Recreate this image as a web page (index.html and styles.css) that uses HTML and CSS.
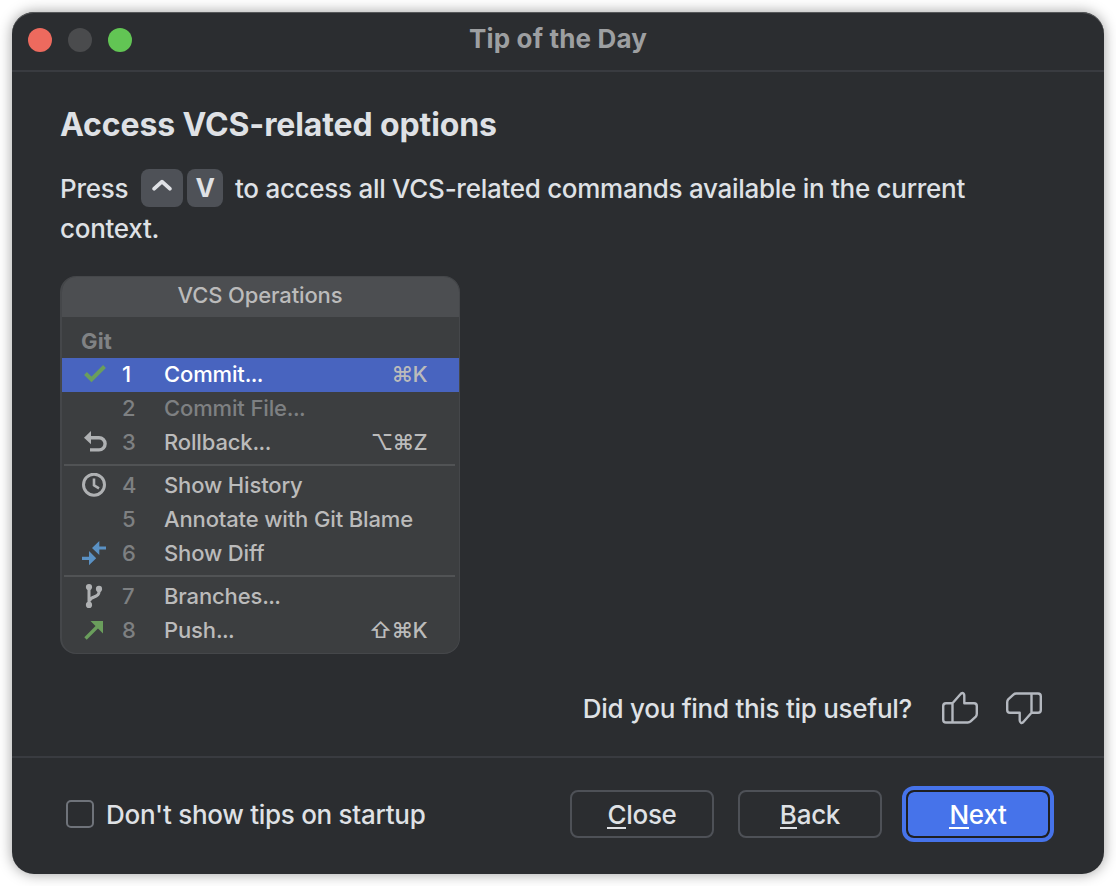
FILE: index.html
```html
<!DOCTYPE html>
<html lang="en">
<head>
<meta charset="utf-8">
<title>Tip of the Day</title>
<link rel="stylesheet" href="styles.css">
</head>
<body>
<main class="window">
  <header class="titlebar">
    <div class="lights"><span class="light red"></span><span class="light gray"></span><span class="light green"></span></div>
    <div class="window-title"><span class="t-title">Tip of the Day</span></div>
  </header>
  <section class="content">
    <h1 class="heading"><span>Access VCS-related options</span></h1>
    <div class="tip">
      <div class="tip-line">
        <span class="press">Press</span>
        <kbd class="key key-ctrl"><svg width="20" height="12" viewBox="0 0 20 12"><path d="M2.2 9.7 10 2.7 17.8 9.7" fill="none" stroke="#dfe1e5" stroke-width="3.8" stroke-linecap="round" stroke-linejoin="round"/></svg></kbd>
        <kbd class="key key-v">V</kbd>
        <span class="rest">to access all VCS-related commands available in the current</span>
      </div>
      <div class="tip-line second">context.</div>
    </div>
    <div class="menu">
      <div class="menu-title"><span>VCS Operations</span></div>
      <div class="group">Git</div>
      <div class="row selected"><span class="icon"><svg width="26" height="24" viewBox="0 0 26 24"><path d="M3.5 11.5 9.5 17.5 22.5 4.5" fill="none" stroke="#6a9e5c" stroke-width="4"/></svg></span><span class="num">1</span><span class="label">Commit<span class="dots">...</span></span><span class="shortcut">⌘K</span></div>
      <div class="row disabled"><span class="icon"></span><span class="num">2</span><span class="label">Commit File<span class="dots">...</span></span></div>
      <div class="row"><span class="icon"><svg width="26" height="24" viewBox="0 0 26 24"><path d="M8 7.7H17A6.1 6.1 0 0 1 17 19.9H8" fill="none" stroke="#afb1b3" stroke-width="3.4"/><path d="M2 7.7 9 1.1V14.3Z" fill="#afb1b3"/></svg></span><span class="num">3</span><span class="label">Rollback<span class="dots">...</span></span><span class="shortcut">⌥⌘Z</span></div>
      <div class="separator"></div>
      <div class="row"><span class="icon"><svg width="26" height="24" viewBox="0 0 26 24"><circle cx="12" cy="11.7" r="10.5" fill="none" stroke="#afb1b3" stroke-width="3"/><path d="M12 5.5V12.3L17 15.3" fill="none" stroke="#afb1b3" stroke-width="2.6"/></svg></span><span class="num">4</span><span class="label">Show History</span></div>
      <div class="row"><span class="icon"></span><span class="num">5</span><span class="label">Annotate with Git Blame</span></div>
      <div class="row"><span class="icon"><svg width="26" height="24" viewBox="0 0 26 24"><path d="M10 7 17.3 0V5.4H24V8.6H17.3V14Z M14.2 17.3 7 10V15.7H0V18.9H7V24.2Z" fill="#5a91c4"/></svg></span><span class="num">6</span><span class="label">Show Diff</span></div>
      <div class="separator"></div>
      <div class="row"><span class="icon"><svg width="26" height="24" viewBox="0 0 26 24"><path d="M7 3V21M17 5V8C17 14 8 12 7.5 17" fill="none" stroke="#afb1b3" stroke-width="3"/><circle cx="7" cy="3.1" r="3.1" fill="#afb1b3"/><circle cx="17" cy="4.9" r="3.1" fill="#afb1b3"/><circle cx="7" cy="20.9" r="3.1" fill="#afb1b3"/></svg></span><span class="num">7</span><span class="label">Branches<span class="dots">...</span></span></div>
      <div class="row"><span class="icon"><svg width="26" height="24" viewBox="0 0 26 24"><path d="M3.5 20.5 16 8" stroke="#6a9e5c" stroke-width="3.4"/><path d="M8.5 3H21V15.5Z" fill="#6a9e5c"/></svg></span><span class="num">8</span><span class="label">Push<span class="dots">...</span></span><span class="shortcut">⇧⌘K</span></div>
    </div>
    <div class="feedback">
      <span class="question">Did you find this tip useful?</span>
      <svg class="thumb" width="40" height="36" viewBox="0 0 40 36"><g fill="none" stroke="#b4b8bf" stroke-width="2.4" stroke-linejoin="round"><path d="M12.5 13.2 20.2 4.5Q21.6 2.6 23 3.1Q24.5 3.8 24.3 6.5V13.2H34Q36.8 13.2 36.8 16V23.8Q36.8 25.5 35.8 26.6L30.6 31.4Q29.4 32.5 27.8 32.5H6Q3.2 32.5 3.2 29.7V16Q3.2 13.2 6 13.2H12.5V32.5"/></g></svg>
      <svg class="thumb" width="40" height="36" viewBox="0 0 40 36"><g fill="none" stroke="#b4b8bf" stroke-width="2.4" stroke-linejoin="round" transform="rotate(180 20 18)"><path d="M12.5 13.2 20.2 4.5Q21.6 2.6 23 3.1Q24.5 3.8 24.3 6.5V13.2H34Q36.8 13.2 36.8 16V23.8Q36.8 25.5 35.8 26.6L30.6 31.4Q29.4 32.5 27.8 32.5H6Q3.2 32.5 3.2 29.7V16Q3.2 13.2 6 13.2H12.5V32.5"/></g></svg>
    </div>
  </section>
  <footer class="footer">
    <label class="option"><span class="checkbox"></span><span class="option-text">Don't show tips on startup</span></label>
    <div class="buttons">
      <button class="button"><span class="mn">C</span>lose</button>
      <button class="button"><span class="mn">B</span>ack</button>
      <button class="button primary"><span class="mn">N</span>ext</button>
    </div>
  </footer>
</main>
</body>
</html>
```
FILE: styles.css
```css
* { box-sizing: border-box; }
body {
  margin: 0;
  padding: 12px;
  height: 886px;
  overflow: hidden;
  background: #fff;
  font-family: Inter, sans-serif;
  font-size: 26px;
  font-weight: 450;
  letter-spacing: -.28px;
  color: #dfe1e5;
}
.window {
  display: flex;
  flex-direction: column;
  width: 1092px;
  height: 862px;
  border-radius: 22px;
  background: #2b2d30;
  box-shadow: inset 0 1px 0 #56585a, 0 0 14px rgba(0, 0, 0, .38);
}
.titlebar {
  display: grid;
  grid-template-columns: 200px 1fr 200px;
  height: 60px;
  border-bottom: 2px solid #393b40;
}
.lights { display: flex; gap: 16px; padding: 16px; }
.light { width: 24px; height: 24px; border-radius: 50%; }
.red { background: #ed6a5e; }
.gray { background: #4a4b4d; }
.green { background: #62c554; }
.window-title {
  text-align: center;
  font-weight: 700;
  font-size: 26px;
  letter-spacing: .15px;
  line-height: 54px;
  color: #9d9fa1;
}
.content { height: 684px; padding: 33px 48px 0; }
.heading { margin: 0; font-size: 32px; font-weight: 700; line-height: 40px; letter-spacing: -.12px; }
.tip { margin-top: 24px; height: 107px; }
.tip-line { display: flex; height: 38px; line-height: 40px; white-space: nowrap; }
.second { margin-top: 2px; }
.press { width: 81px; }
.key {
  display: flex;
  align-items: center;
  justify-content: center;
  height: 38px;
  border-radius: 8px;
  background: #4e5157;
  font-family: Inter, sans-serif;
  font-size: 26px;
  font-weight: 700;
}
.key-ctrl { width: 42px; margin-right: 4px; padding-bottom: 6px; }
.key-v { width: 36px; margin-right: 12px; }
.menu {
  width: 400px;
  height: 378px;
  border: 1px solid #45474a;
  border-left-width: 2px;
  border-radius: 16px;
  background: #3c3e40;
  font-size: 22px;
  letter-spacing: -.14px;
  color: #bbb;
  overflow: hidden;
}
.menu-title { height: 40px; background: #4c4e51; line-height: 37px; padding-right: 1px; text-align: center; }
.group { height: 41px; padding: 7px 0 0 19px; line-height: 34px; font-weight: 650; letter-spacing: .2px; color: #808284; }
.row { display: flex; align-items: center; height: 34px; padding: 0 32px 2px 20px; line-height: 32px; }
.icon { display: flex; width: 40px; height: 24px; }
.num { width: 42px; color: #7e8082; }
.label { flex: 1; white-space: nowrap; }
.dots { letter-spacing: -.6px; }
.shortcut { letter-spacing: -.7px; }
.selected { background: #4864bf; }
.selected .num, .selected .label { color: #fff; }
.disabled { color: #7e8082; }
.separator { height: 2px; margin: 4px 4px 3px 2px; background: #515355; }
.feedback { display: flex; align-items: center; justify-content: flex-end; height: 40px; margin-top: 34px; padding-right: 12px; }
.question { margin-right: 28px; }
.thumb + .thumb { margin-left: 24px; }
.footer {
  display: flex;
  align-items: center;
  justify-content: space-between;
  height: 118px;
  padding: 0 54px 4px;
  border-top: 2px solid #393b40;
}
.option { display: flex; align-items: center; gap: 12px; }
.checkbox { width: 28px; height: 28px; border: 2px solid #6f737a; border-radius: 5px; }
.buttons { display: flex; gap: 24px; }
.button {
  width: 144px;
  height: 48px;
  padding: 2px 0 0;
  border: 2px solid #4e5157;
  border-radius: 8px;
  background: transparent;
  font: 450 26px/42px Inter, sans-serif;
  letter-spacing: -.28px;
  color: #dfe1e5;
}
.mn { display: inline-block; height: 29px; line-height: 29px; border-bottom: 2px solid; }
.primary {
  border-color: #1e1f22;
  background: #4673ea;
  background-clip: padding-box;
  color: #fff;
  box-shadow: 0 0 0 4px #4673ea;
}
```
